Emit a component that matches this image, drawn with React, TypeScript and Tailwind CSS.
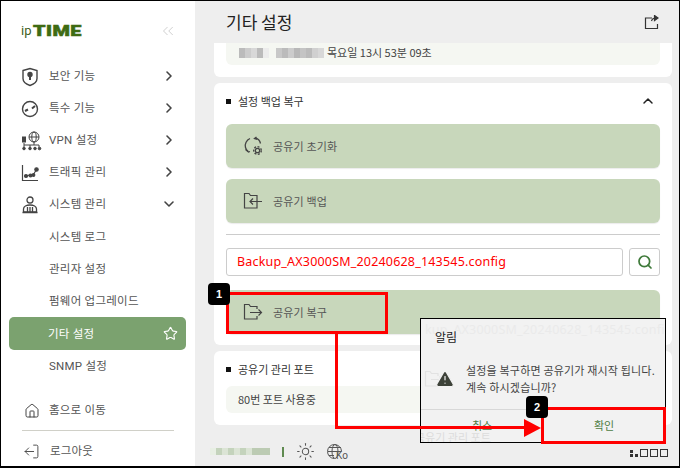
import React from "react";
import { ChevronRight, ChevronDown, ChevronUp, ChevronsLeft, Star, Search, Sun, TriangleAlert, Home, LogOut } from "lucide-react";

const FONT = "font-['Roboto','Noto_Sans_CJK_KR',sans-serif]";
const KR = "font-['Noto_Sans_CJK_KR','Noto_Sans',sans-serif]";

const ShieldIcon = () => (
  <svg width="18" height="20" viewBox="0 0 18 20" fill="none" stroke="#444" strokeWidth="1.4">
    <path d="M2 3.500 9 1.500l7 2v8c0 3.500-3.500 5.800-7 7-3.500-1.200-7-3.500-7-7z" />
    <circle cx="9" cy="7.500" r="2" fill="#444" />
    <path d="M9 8v5" strokeWidth="2" />
  </svg>
);
const GaugeIcon = () => (
  <svg width="18" height="18" viewBox="0 0 18 18" fill="none" stroke="#444" strokeWidth="1.4">
    <circle cx="9" cy="9" r="7.500" />
    <path d="M4 11l3-1.500M14 6l-3 2.500" strokeWidth="2" />
  </svg>
);
const VpnIcon = () => (
  <svg width="22" height="20" viewBox="0 0 22 20" fill="none" stroke="#444" strokeWidth="1">
    <circle cx="13" cy="6" r="5" />
    <ellipse cx="13" cy="6" rx="2.200" ry="5" />
    <path d="M8 6h10M13 11v3M3 12v2M3 14h15M9 14v2M3 14v2M18 14v2" />
    <rect x="1.500" y="6" width="3" height="5" fill="#444" />
    <circle cx="3" cy="17.500" r="1.300" fill="#444" />
    <circle cx="9" cy="17.500" r="1.300" fill="#444" />
    <circle cx="14" cy="17.500" r="1.300" fill="#444" />
    <circle cx="18.500" cy="17.500" r="1.300" fill="#444" />
  </svg>
);
const TrafficIcon = () => (
  <svg width="18" height="18" viewBox="0 0 18 18" fill="none" stroke="#444" strokeWidth="1.200">
    <path d="M1.500 1v15.500H17" />
    <path d="M5 12l4-1 3 0 4-6" />
    <circle cx="5" cy="12" r="1.500" fill="#444" />
    <circle cx="9.500" cy="11.500" r="1.500" fill="#444" />
    <circle cx="12.500" cy="11" r="1.300" fill="#444" />
    <circle cx="15.500" cy="5.500" r="1.700" fill="#444" />
  </svg>
);
const AdminIcon = () => (
  <svg width="18" height="18" viewBox="0 0 18 18" fill="none" stroke="#444" strokeWidth="1.300">
    <circle cx="9" cy="4" r="3" />
    <path d="M2.500 16v-3c0-2.500 3-4 6.500-4s6.500 1.500 6.500 4v3z" />
    <path d="M1.500 16.500h15M6.500 11v5M9 11v5M11.500 11v5" />
  </svg>
);
const ResetIcon = () => (
  <svg width="20" height="20" viewBox="0 0 20 20" fill="none" stroke="#444" strokeWidth="1.300">
    <path d="M7 2.500C3.500 4 1.500 8 2.500 11.500c.4 1.500 1.200 2.800 2.500 3.800" />
    <path d="M2.500 13.500 5.500 16l1.500-.5" />
    <path d="M13.500 1 11.500 2.500l2.500 1M12 2c3 .5 5 3 5.500 5.500" />
    <circle cx="14.500" cy="14.500" r="2.200" />
    <circle cx="14.500" cy="14.500" r="3.800" strokeDasharray="2 1.500" />
  </svg>
);
const BackupIcon = () => (
  <svg width="20" height="18" viewBox="0 0 20 18" fill="none" stroke="#444" strokeWidth="1.200">
    <path d="M14 3.500V16H1.500V1.500H6l1.500 2z" />
    <path d="M7 9.500h12M10 6.500 7 9.500l3 3" />
  </svg>
);
const RestoreIcon = ({ color = "#444" }: { color?: string }) => (
  <svg width="20" height="18" viewBox="0 0 20 18" fill="none" stroke={color} strokeWidth="1.200">
    <path d="M14 6V3.500H7.500L6 1.500H1.500V16H14v-3" />
    <path d="M7 9.500h11.500M15.500 6.500l3 3-3 3" />
  </svg>
);
const ShareIcon = () => (
  <svg width="15" height="15" viewBox="0 0 15 15" fill="none" stroke="#333" strokeWidth="1.200">
    <path d="M8 3H1.500v10.500h12V9" />
    <path d="M7.500 6c.5-2 2-3 4.500-3" />
    <path d="M10.500 .5 14 3l-3.500 2.500z" fill="#333" />
  </svg>
);
const GlobeKo = () => (
  <svg width="17" height="18" viewBox="0 0 17 18" fill="none" stroke="#555" strokeWidth="1">
    <path d="M7 15.500a7 7 0 1 1 7.500-7.500" />
    <ellipse cx="8" cy="8.500" rx="3" ry="7" />
    <path d="M1 8.500h13.500M2 4.500h12M2 12.500h5" />
  </svg>
);

const MenuRow = ({ icon, label, chevron = "right" }: { icon: React.ReactNode; label: string; chevron?: "right" | "down" }) => (
  <div className="flex h-[32px] items-center pl-[20px] pr-[18px]">
    <span className="flex w-[28px] justify-start pt-[1px]">{icon}</span>
    <span className="pt-[2px] text-[11.500px] tracking-[0.25px] text-[#555]">{label}</span>
    <span className="ml-auto text-[#444]">
      {chevron === "right" ? <ChevronRight size={16} strokeWidth={2.400} /> : <ChevronDown size={16} strokeWidth={2.400} />}
    </span>
  </div>
);

const SubRow = ({ label }: { label: string }) => (
  <div className="flex h-[32px] items-center pl-[48px] pt-[2px] text-[11.500px] tracking-[0.25px] text-[#555]">{label}</div>
);

const Mosaic = ({ cells, h = 8 }: { cells: string[]; h?: number }) => (
  <div className="flex items-center">
    {cells.map((c, i) => (
      <div key={i} className="w-[6px]" style={{ backgroundColor: c, height: h }} />
    ))}
  </div>
);

const ActionButton = ({ icon, label }: { icon: React.ReactNode; label: string }) => (
  <div className="flex h-[44px] items-center rounded-[6px] bg-[#c8d7bb] pl-[17px] shadow-[0_1px_1px_rgba(0,0,0,0.08)]">
    <span className="flex w-[30px]">{icon}</span>
    <span className={`${KR} pt-[1px] text-[11px] tracking-[0.15px] text-[#555]`}>{label}</span>
  </div>
);

const Bullet = ({ label }: { label: string }) => (
  <div className="flex items-center">
    <span className="mr-[7px] h-[5px] w-[5px] bg-[#111]" />
    <span className={`${KR} text-[11px] text-[#333]`}>{label}</span>
  </div>
);

export default function App() {
  return (
    <div className={`${FONT} relative flex h-[468px] w-[680px] overflow-hidden border border-b-2 border-black bg-[#eeeeee]`}>
      {/* Sidebar */}
      <aside className="flex w-[194px] shrink-0 flex-col bg-white">
        <div className="flex h-[60px] items-center pl-[20px] pr-[18px]">
          <span className="mr-[2px] text-[13px] leading-none text-[#3f5f1f]">ip</span>
          <span className="origin-left text-[14px] font-black leading-none tracking-[0.3px] text-[#3f6b12] [-webkit-text-stroke:0.5px_#3f6b12] [transform:scaleX(1.420)]">TIME</span>
          <ChevronsLeft size={18} strokeWidth={1.300} className="ml-auto text-[#cfcfcf]" />
        </div>
        <div className="flex flex-col">
          <MenuRow icon={<ShieldIcon />} label="보안 기능" />
          <MenuRow icon={<GaugeIcon />} label="특수 기능" />
          <MenuRow icon={<VpnIcon />} label="VPN 설정" />
          <MenuRow icon={<TrafficIcon />} label="트래픽 관리" />
          <MenuRow icon={<AdminIcon />} label="시스템 관리" chevron="down" />
          <div className="h-[1px]" />
          <SubRow label="시스템 로그" />
          <SubRow label="관리자 설정" />
          <SubRow label="펌웨어 업그레이드" />
          <div className="ml-[8px] mr-[9px] flex h-[33px] items-center rounded-[5px] bg-[#7ba26f] pl-[39px] pr-[8px] text-[11.500px] tracking-[0.25px] text-white">
            <span className="pt-[2px]">기타 설정</span>
            <Star size={15} strokeWidth={1.800} className="ml-auto text-white" />
          </div>
          <SubRow label="SNMP 설정" />
        </div>
        <div className="mt-[12px] flex h-[32px] items-center pl-[23px] pt-[2px] text-[11.500px] tracking-[0.2px] text-[#555]">
          <Home size={16} strokeWidth={1.500} className="mr-[9px] text-[#444]" />
          홈으로 이동
        </div>
        <div className="mx-[21px] my-[4px] h-px bg-[#d0d0c8]" />
        <div className="flex h-[32px] items-center pl-[22px] pt-[2px] text-[11.500px] tracking-[0.2px] text-[#555]">
          <LogOut size={17} strokeWidth={1.300} className="mr-[10px] rotate-180 text-[#444]" />
          로그아웃
        </div>
      </aside>

      {/* Main */}
      <main className="relative flex min-w-0 flex-1 flex-col">
        <header className="flex h-[42px] shrink-0 items-center pl-[31px] pr-[20px]">
          <span className={`${KR} text-[17px] text-[#222]`}>기타 설정</span>
          <span className="ml-auto"><ShareIcon /></span>
        </header>
        <div className="flex flex-col gap-[6px] pl-[19px] pr-[7px]">
          <section className="rounded-b-[6px] bg-white px-[12px] pb-[12px]">
            <div className="flex h-[22px] items-center rounded-b-[6px] bg-[#f5f7f2] pb-[3px] pl-[13px]">
              <Mosaic cells={["#bbb", "#ccc", "#d8d8d8", "#bbb", "#ececec"]} h={10} />
              <div className="w-[7px]" />
              <Mosaic cells={["#c8c8c8", "#bbb", "#ccc", "#b8b8b8", "#c4c4c4", "#bbb", "#d0d0d0", "#d8d8d8"]} h={10} />
              <span className={`${KR} ml-[3px] text-[11px] text-[#444]`}>목요일 13시 53분 09초</span>
            </div>
          </section>

          <section className="rounded-[6px] bg-white px-[12px] pb-[11px]">
            <div className="flex h-[41px] items-center justify-between pb-[5px]">
              <Bullet label="설정 백업 복구" />
              <ChevronUp size={16} strokeWidth={2.200} className="mr-[4px] text-[#222]" />
            </div>
            <div className="flex flex-col gap-[11px]">
              <ActionButton icon={<ResetIcon />} label="공유기 초기화" />
              <ActionButton icon={<BackupIcon />} label="공유기 백업" />
            </div>
            <div className="mt-[11px] border-t border-[#ccc] pt-[13px]">
              <div className="flex gap-[6px]">
                <div className="flex h-[28px] flex-1 items-center rounded-[3px] border border-[#ccc] bg-white pl-[10px] font-['Noto_Sans',sans-serif] text-[12.500px] tracking-[0.19px] text-[#f00]">
                  Backup_AX3000SM_20240628_143545.config
                </div>
                <div className="flex h-[28px] w-[31px] items-center justify-center rounded-[3px] border border-[#ccc]">
                  <Search size={16} strokeWidth={2.600} className="text-[#3f7a3a]" />
                </div>
              </div>
            </div>
            <div className="mt-[14px]">
              <ActionButton icon={<RestoreIcon />} label="공유기 복구" />
            </div>
          </section>

          <section className="rounded-[6px] bg-white px-[12px] pb-[12px]">
            <div className="flex h-[35px] items-center pt-[1px]">
              <Bullet label="공유기 관리 포트" />
            </div>
            <div className={`${KR} flex h-[27px] items-center rounded-[6px] bg-[#f5f7f2] pl-[12px] text-[11px] text-[#444]`}>
              80번 포트 사용중
            </div>
          </section>
        </div>

        <footer className="mt-[17px] flex items-center pl-[15px]">
          <Mosaic cells={["#e8efe4", "#c4d3bc", "#dbe4d5", "#c4d3bc", "#dbe4d5", "#c4d3bc", "#dbe4d5", "#bccbb3", "#bccbb3", "#bccbb3"]} h={7} />
          <span className="ml-[12px] h-[10px] w-[2px] bg-[#5f8a50]" />
          <Sun size={19} strokeWidth={1.300} className="ml-[12px] text-[#555]" />
          <span className="relative ml-[12px] flex">
            <GlobeKo />
            <span className="absolute left-[9px] top-[8px] text-[10px] leading-[10px] text-[#555]">Ko</span>
          </span>
        </footer>
      </main>

      {/* Dialog */}
      <div className="absolute left-[419px] top-[317px] h-[125px] w-[246px] overflow-hidden border border-black bg-[#f2f2f2]">
        <div className="absolute left-[4px] top-[2px] font-['Noto_Sans',sans-serif] text-[12.500px] tracking-[0.19px] whitespace-nowrap text-[#eaeaea]">kup_AX3000SM_20240628_143545.config</div>
        <div className="absolute left-[3px] top-[51px] flex items-center gap-[4px] text-[11px] text-[#e2e2e2]">
          <RestoreIcon color="#e2e2e2" />
        </div>
        <div className={`${KR} absolute left-[-6px] top-[110px] text-[11px] whitespace-nowrap text-[#dcdcdc]`}>공유기 관리 포트</div>
        <div className="relative flex h-full flex-col">
          <div className={`${KR} pl-[14px] pt-[9px] text-[12px] leading-[18px] text-[#222]`}>알림</div>
          <div className="flex flex-1 items-center pb-[1px] pl-[14px] pt-[3px]">
            <TriangleAlert size={20} fill="#3d4239" strokeWidth={1.500} className="mr-[11px] shrink-0 text-[#f2f2f2]" />
            <p className={`${KR} text-[11px] leading-[17px] tracking-[0.18px] text-[#444]`}>
              설정을 복구하면 공유기가 재시작 됩니다.<br />계속 하시겠습니까?
            </p>
          </div>
          <div className="flex h-[33px] shrink-0 border-t border-[#d8d8d8] pb-[1px]">
            <div className={`${KR} flex flex-1 items-center justify-center text-[11px] text-[#4e7d43]`}>취소</div>
            <div className={`${KR} flex flex-1 items-center justify-center text-[11px] text-[#4e7d43]`}>확인</div>
          </div>
        </div>
      </div>

      {/* Annotations */}
      <div className="absolute left-[225px] top-[291px] h-[42px] w-[162px] border-[3px] border-[#f00]" />
      <div className="absolute left-[334px] top-[333px] h-[94px] w-[3px] bg-[#f00]" />
      <div className="absolute left-[334px] top-[425px] h-[3px] w-[194px] bg-[#f00]" />
      <svg className="absolute left-[523px] top-[418px]" width="18" height="18" viewBox="0 0 18 18"><path d="M0 0 17 9 0 18z" fill="#f00" /></svg>
      <div className="absolute left-[540px] top-[406px] h-[37px] w-[125px] border-[3px] border-[#f00]" />
      <div className="absolute left-[207px] top-[282px] flex h-[22px] w-[22px] items-center justify-center rounded-[4px] bg-black font-['Liberation_Sans',sans-serif] text-[11px] font-bold text-white">1</div>
      <div className="absolute left-[525px] top-[395px] flex h-[22px] w-[22px] items-center justify-center rounded-[4px] bg-black font-['Liberation_Sans',sans-serif] text-[11px] font-bold text-white">2</div>

      {/* Pager dots */}
      <div className="absolute left-[629px] top-[448px] flex items-center gap-[2px]">
        <div className="grid h-[7px] w-[8px] grid-cols-2 gap-[1px]">
          <span className="h-[3px] w-[3px] bg-[#333]" /><span className="h-[3px] w-[3px]" />
          <span className="h-[3px] w-[3px] bg-[#333]" /><span className="h-[3px] w-[3px] bg-[#333]" />
        </div>
        <span className="h-[8px] w-[8px] border border-[#333]" />
        <span className="h-[8px] w-[8px] border border-[#333]" />
        <span className="h-[8px] w-[8px] border border-[#333]" />
      </div>
    </div>
  );
}
